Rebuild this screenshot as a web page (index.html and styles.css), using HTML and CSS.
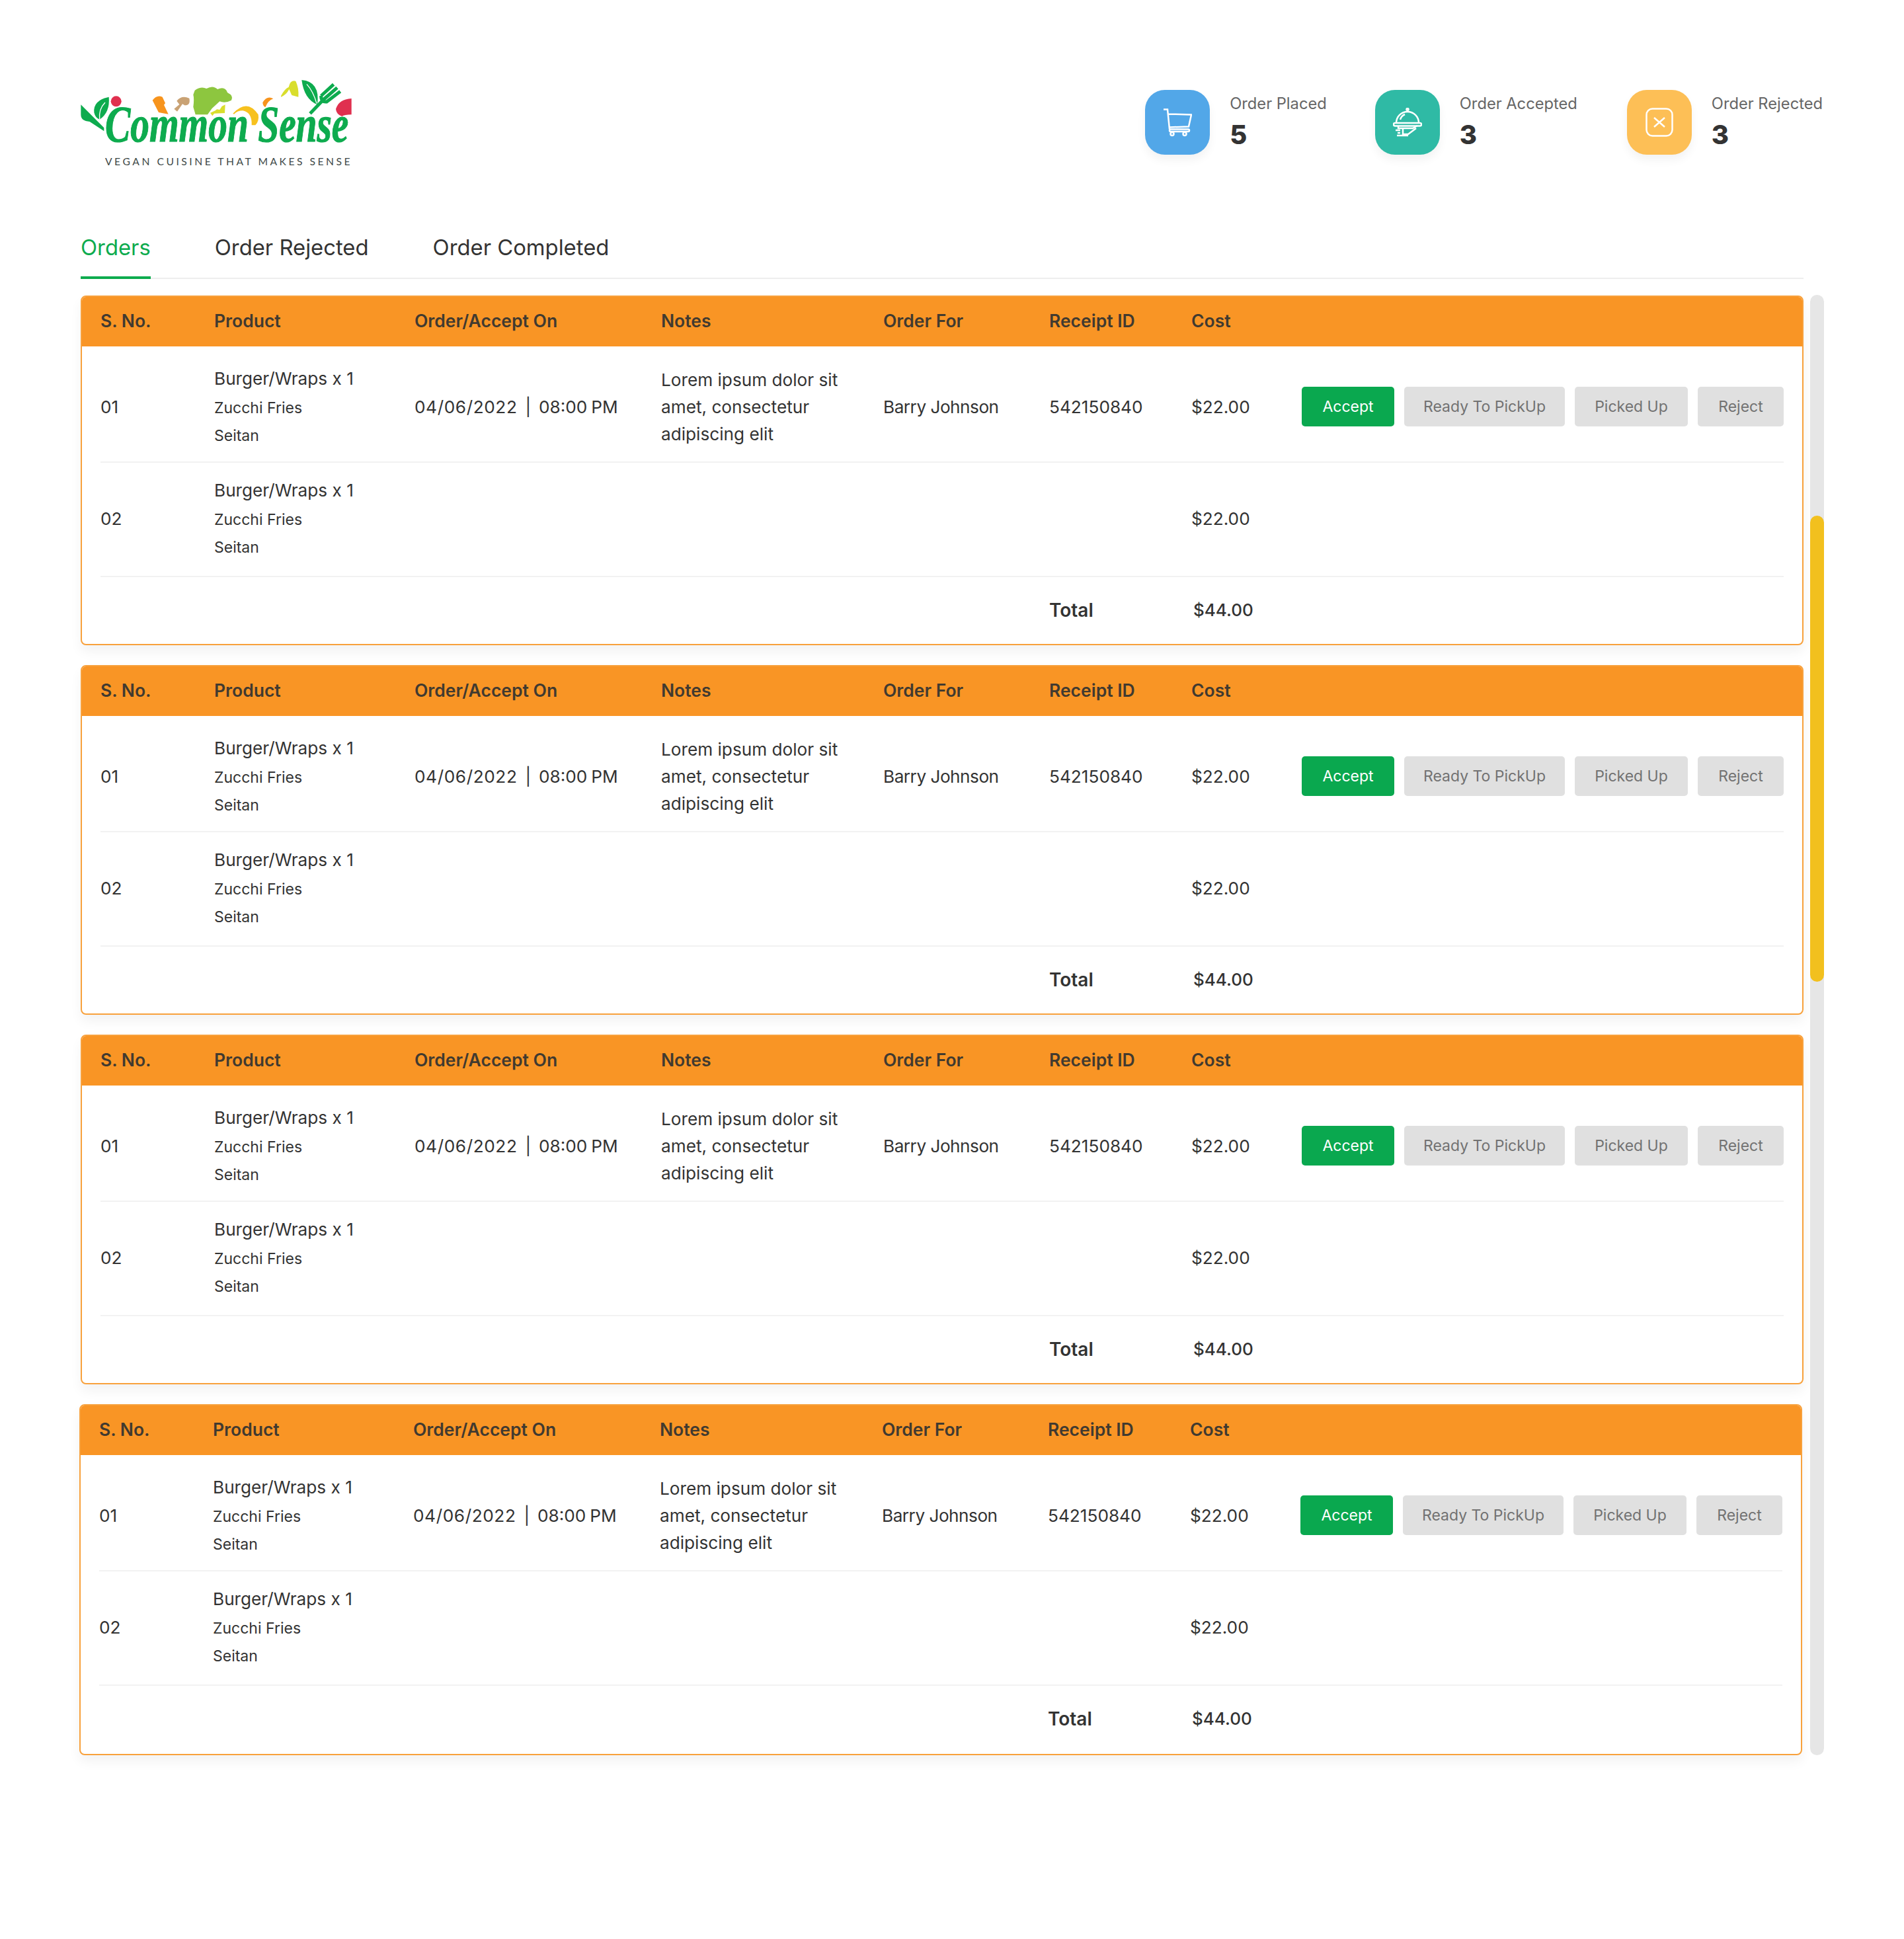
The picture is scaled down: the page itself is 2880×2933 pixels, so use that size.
FILE: index.html
```html
<!DOCTYPE html>
<html lang="en">
<head>
    <meta charset="UTF-8">
    <meta name="viewport" content="width=device-width, initial-scale=1.0">
    <title>Common Sense - Orders</title>
    <link rel="stylesheet" href="styles.css">
</head>
<body>
    <div class="page">
        <!-- Header -->
        <header class="top-bar">
            <svg class="logo" viewBox="94 90 1230 405" aria-label="Common Sense logo">
                <path class="g" d="M95 205 L200 310 L200 325 L135 282 Q95 280 95 250 Z"/>
                <path class="g" d="M222 170 Q150 185 155 240 Q160 265 180 272 Q228 240 222 170 Z"/>
                <path class="rib" d="M205 195 Q175 225 180 272"/>
                <circle class="r" cx="255" cy="190" r="24"/>
                <path class="o" d="M420 185 Q440 158 465 170 L478 198 L472 206 L492 248 L448 240 Z"/>
                <path class="t" d="M530 188 Q552 160 587 176 Q594 208 566 208 L556 202 L532 236 L518 224 L542 204 Z"/>
                <path class="b" d="M612 140 Q640 120 665 132 Q695 115 715 135 Q750 120 760 150 Q790 165 778 185 Q750 200 725 190 L690 222 L670 250 L615 250 L605 215 Q610 180 605 160 Z"/>
                <path class="y" d="M682 242 L705 232 L712 226 L725 228 L735 212 L750 205 L748 243 L700 245 L692 256 Z"/>
                <path class="w" d="M785 245 Q850 175 900 250 Q905 280 887 298 L870 298 Q872 240 830 232 Q805 232 790 248 Z"/>
                <path class="o" d="M920 195 Q940 162 968 178 Q945 185 932 217 Q920 210 920 195 Z"/>
                <path class="y" d="M1003 165 Q1020 132 1038 125 Q1045 92 1070 98 Q1085 130 1082 170 L1052 162 L1040 135 Q1028 160 1003 170 Z"/>
                <path class="g" d="M1097 93 Q1182 100 1168 205 Q1108 180 1097 93 Z"/>
                <path class="rib" d="M1120 112 Q1150 145 1165 200"/>
                <path class="fork" d="M1135 245 L1200 178 M1185 165 Q1185 195 1210 192 L1272 145 M1185 165 L1242 113 M1198 180 L1258 128"/>
                <path class="r" d="M1252 225 Q1265 180 1323 177 L1323 250 Q1290 250 1280 258 Q1255 250 1252 225 Z"/>
                <text class="logo-script" transform="translate(205 372) scale(1 1.150)" textLength="1105" lengthAdjust="spacingAndGlyphs">Common Sense</text>
                <text class="logo-tag" x="205" y="480" textLength="1112">VEGAN CUISINE THAT MAKES SENSE</text>
            </svg>
            <div class="stats">
                <div class="stat">
                    <div class="stat-icon blue">
                        <svg viewBox="0 0 44 42"><path d="M1 1.500h6l3 30M8 8.500 43 9.500 39 27.500 10 28.500"/><rect x="10" y="31.500" width="30" height="3.500" rx="1.700"/><circle cx="14" cy="38.500" r="2.500"/><circle cx="33" cy="38.500" r="2.500"/></svg>
                    </div>
                    <div><div class="stat-label">Order Placed</div><div class="stat-value">5</div></div>
                </div>
                <div class="stat">
                    <div class="stat-icon teal">
                        <svg viewBox="0 0 44 44"><circle cx="22" cy="2.500" r="1.500"/><path d="M5 23a17 17 0 0 1 34 0"/><path d="M11 18a12 12 0 0 1 7-8"/><rect x="1" y="23" width="42" height="4.500" rx="2"/><path d="M8 28v3h22l7-4M15 31v9h8l12-9M4 34h7M7 38h4M6 42h17"/></svg>
                    </div>
                    <div><div class="stat-label">Order Accepted</div><div class="stat-value">3</div></div>
                </div>
                <div class="stat">
                    <div class="stat-icon amber">
                        <svg viewBox="0 0 42 44"><rect x="1.500" y="1.500" width="39" height="41" rx="9"/><path d="M13 15 29 29M29 15 13 29"/></svg>
                    </div>
                    <div><div class="stat-label">Order Rejected</div><div class="stat-value">3</div></div>
                </div>
            </div>
        </header>

        <div class="content">
            <div class="content-main">
                <!-- Tabs -->
                <nav class="tabs">
                    <a class="tab active">Orders</a>
                    <a class="tab">Order Rejected</a>
                    <a class="tab">Order Completed</a>
                </nav>

                <!-- Order cards -->
                <div class="card">
                    <div class="row row-head">
                        <div>S. No.</div><div>Product</div><div>Order/Accept On</div><div>Notes</div><div>Order For</div><div>Receipt ID</div><div>Cost</div>
                    </div>
                    <div class="card-body">
                        <div class="row row-first">
                            <div>01</div>
                            <div class="product"><div>Burger/Wraps x 1</div><small>Zucchi Fries</small><small>Seitan</small></div>
                            <div class="when"><span class="date">04/06/2022</span> &nbsp;|&nbsp; 08:00 PM</div>
                            <div class="notes">Lorem ipsum dolor sit amet, consectetur adipiscing elit</div>
                            <div class="name">Barry Johnson</div>
                            <div>542150840</div>
                            <div>$22.00</div>
                            <div class="actions"><button class="btn btn-accept">Accept</button><button class="btn btn-ready">Ready To PickUp</button><button class="btn btn-picked">Picked Up</button><button class="btn btn-reject">Reject</button></div>
                        </div>
                        <div class="row row-second">
                            <div>02</div>
                            <div class="product"><div>Burger/Wraps x 1</div><small>Zucchi Fries</small><small>Seitan</small></div>
                            <div></div><div></div><div></div><div></div>
                            <div>$22.00</div>
                        </div>
                        <div class="row row-total">
                            <div></div><div></div><div></div><div></div><div></div>
                            <div class="total-label">Total</div>
                            <div class="total-cost">$44.00</div>
                        </div>
                    </div>
                </div>

                <div class="card">
                    <div class="row row-head">
                        <div>S. No.</div><div>Product</div><div>Order/Accept On</div><div>Notes</div><div>Order For</div><div>Receipt ID</div><div>Cost</div>
                    </div>
                    <div class="card-body">
                        <div class="row row-first">
                            <div>01</div>
                            <div class="product"><div>Burger/Wraps x 1</div><small>Zucchi Fries</small><small>Seitan</small></div>
                            <div class="when"><span class="date">04/06/2022</span> &nbsp;|&nbsp; 08:00 PM</div>
                            <div class="notes">Lorem ipsum dolor sit amet, consectetur adipiscing elit</div>
                            <div class="name">Barry Johnson</div>
                            <div>542150840</div>
                            <div>$22.00</div>
                            <div class="actions"><button class="btn btn-accept">Accept</button><button class="btn btn-ready">Ready To PickUp</button><button class="btn btn-picked">Picked Up</button><button class="btn btn-reject">Reject</button></div>
                        </div>
                        <div class="row row-second">
                            <div>02</div>
                            <div class="product"><div>Burger/Wraps x 1</div><small>Zucchi Fries</small><small>Seitan</small></div>
                            <div></div><div></div><div></div><div></div>
                            <div>$22.00</div>
                        </div>
                        <div class="row row-total">
                            <div></div><div></div><div></div><div></div><div></div>
                            <div class="total-label">Total</div>
                            <div class="total-cost">$44.00</div>
                        </div>
                    </div>
                </div>

                <div class="card">
                    <div class="row row-head">
                        <div>S. No.</div><div>Product</div><div>Order/Accept On</div><div>Notes</div><div>Order For</div><div>Receipt ID</div><div>Cost</div>
                    </div>
                    <div class="card-body">
                        <div class="row row-first">
                            <div>01</div>
                            <div class="product"><div>Burger/Wraps x 1</div><small>Zucchi Fries</small><small>Seitan</small></div>
                            <div class="when"><span class="date">04/06/2022</span> &nbsp;|&nbsp; 08:00 PM</div>
                            <div class="notes">Lorem ipsum dolor sit amet, consectetur adipiscing elit</div>
                            <div class="name">Barry Johnson</div>
                            <div>542150840</div>
                            <div>$22.00</div>
                            <div class="actions"><button class="btn btn-accept">Accept</button><button class="btn btn-ready">Ready To PickUp</button><button class="btn btn-picked">Picked Up</button><button class="btn btn-reject">Reject</button></div>
                        </div>
                        <div class="row row-second">
                            <div>02</div>
                            <div class="product"><div>Burger/Wraps x 1</div><small>Zucchi Fries</small><small>Seitan</small></div>
                            <div></div><div></div><div></div><div></div>
                            <div>$22.00</div>
                        </div>
                        <div class="row row-total">
                            <div></div><div></div><div></div><div></div><div></div>
                            <div class="total-label">Total</div>
                            <div class="total-cost">$44.00</div>
                        </div>
                    </div>
                </div>

                <div class="card card-last">
                    <div class="row row-head">
                        <div>S. No.</div><div>Product</div><div>Order/Accept On</div><div>Notes</div><div>Order For</div><div>Receipt ID</div><div>Cost</div>
                    </div>
                    <div class="card-body">
                        <div class="row row-first">
                            <div>01</div>
                            <div class="product"><div>Burger/Wraps x 1</div><small>Zucchi Fries</small><small>Seitan</small></div>
                            <div class="when"><span class="date">04/06/2022</span> &nbsp;|&nbsp; 08:00 PM</div>
                            <div class="notes">Lorem ipsum dolor sit amet, consectetur adipiscing elit</div>
                            <div class="name">Barry Johnson</div>
                            <div>542150840</div>
                            <div>$22.00</div>
                            <div class="actions"><button class="btn btn-accept">Accept</button><button class="btn btn-ready">Ready To PickUp</button><button class="btn btn-picked">Picked Up</button><button class="btn btn-reject">Reject</button></div>
                        </div>
                        <div class="row row-second">
                            <div>02</div>
                            <div class="product"><div>Burger/Wraps x 1</div><small>Zucchi Fries</small><small>Seitan</small></div>
                            <div></div><div></div><div></div><div></div>
                            <div>$22.00</div>
                        </div>
                        <div class="row row-total">
                            <div></div><div></div><div></div><div></div><div></div>
                            <div class="total-label">Total</div>
                            <div class="total-cost">$44.00</div>
                        </div>
                    </div>
                </div>
            </div>

            <!-- Scrollbar -->
            <div class="scroll-track"><div class="scroll-thumb"></div></div>
        </div>
    </div>
</body>
</html>
```
FILE: styles.css
```css
body {
    font-family: Inter, "Noto Sans", sans-serif;
    margin: 0;
    padding: 0;
    background-color: #ffffff;
    color: #333333;
    font-size: 26.200px;
}
.page {
    padding: 120px 121px 275px 122px;
}
.top-bar {
    display: flex;
    justify-content: space-between;
    align-items: center;
    height: 135px;
}
.logo {
    width: 410px;
    height: 135px;
    overflow: visible;
}
.logo .g { fill: #0dab4e; }
.logo .r { fill: #e0304f; }
.logo .o { fill: #f7941d; }
.logo .t { fill: #c9a274; }
.logo .b { fill: #8dc63f; }
.logo .y { fill: #d9de2d; }
.logo .w { fill: #f7c11e; }
.logo .rib {
    fill: none;
    stroke: #ffffff;
    stroke-width: 4;
}
.logo .fork {
    fill: none;
    stroke: #0dab4e;
    stroke-width: 15;
}
.logo-script {
    font-family: "Liberation Serif", serif;
    font-style: italic;
    font-weight: 700;
    font-size: 204px;
    fill: #0dab4e;
    stroke: #0dab4e;
    stroke-width: 3;
}
.logo-tag {
    font-family: Lato, sans-serif;
    font-size: 47px;
    fill: #3f4a48;
}
.stats {
    display: flex;
    margin-top: -5px;
    margin-right: 2px;
}
.stat {
    display: flex;
    align-items: center;
    margin-left: 75px;
}
.stat:nth-child(2) {
    margin-left: 73px;
}
.stat-icon {
    width: 98px;
    height: 98px;
    border-radius: 30px;
    margin-right: 30px;
    display: flex;
    justify-content: center;
    align-items: center;
    box-shadow: 0 8px 14px rgba(0, 0, 0, 0.05);
}
.stat-icon svg {
    width: 44px;
    height: 44px;
    fill: none;
    stroke: #ffffff;
    stroke-width: 2.500;
}
.stat-icon.blue { background: #52a7e8; }
.stat-icon.teal { background: #2fbaa5; }
.stat-icon.amber { background: #fdbf56; }
.stat-label {
    font-size: 23.700px;
    line-height: 28px;
    color: #666666;
}
.stat-value {
    font-size: 40px;
    font-weight: 800;
    line-height: 46px;
    margin-top: 10px;
    color: #333333;
}
.content {
    display: flex;
    align-items: flex-end;
}
.content-main {
    width: 2606px;
}
.tabs {
    display: flex;
    margin-top: 99px;
    margin-bottom: 25px;
    border-bottom: 2px solid #eeeeee;
    height: 66px;
}
.tab {
    font-size: 32.800px;
    line-height: 40px;
    margin-right: 97px;
    color: #333333;
}
.tab.active {
    color: #0dab4e;
    height: 64px;
    border-bottom: 4px solid #0dab4e;
}
.card {
    border: 2px solid #f8a13c;
    border-radius: 8px;
    margin-bottom: 30px;
    height: 529px;
    box-sizing: border-box;
    box-shadow: 0 10px 18px rgba(0, 0, 0, 0.05);
    overflow: hidden;
}
.card-last {
    margin-left: -2px;
    margin-right: 2px;
    margin-bottom: 0;
    height: 531px;
}
.row {
    display: grid;
    grid-template-columns: 172px 303px 373px 336px 251px 215px 167px 1fr;
    align-items: center;
}
.row-head {
    background: #f99525;
    height: 77px;
    margin-top: -2px;
    padding: 0 28px 1px;
    font-size: 26.500px;
    font-weight: 600;
    box-sizing: border-box;
    color: #413a30;
}
.card-body {
    padding: 0 28px;
}
.row-first {
    padding: 26px 0 24px;
    height: 176px;
    box-sizing: border-box;
    border-bottom: 2px solid #f2f2f2;
}
.row-second {
    padding: 19px 0 27px;
    height: 173px;
    box-sizing: border-box;
    border-bottom: 2px solid #f2f2f2;
}
.row-total {
    height: 103px;
    padding-bottom: 4px;
    box-sizing: border-box;
}
.total-label {
    font-weight: 600;
    font-size: 28px;
}
.total-cost {
    padding-left: 3px;
    font-size: 26px;
    font-weight: 500;
}
.product {
    line-height: 42px;
    margin-top: 2px;
}
.product small {
    display: block;
    font-size: 23px;
}
.product div + small {
    margin-top: 2px;
}
.when {
    word-spacing: -1.400px;
}
.date {
    letter-spacing: 0.600px;
}
.name {
    letter-spacing: -0.500px;
}
.notes {
    line-height: 41px;
    padding-right: 30px;
}
.actions {
    display: flex;
    gap: 15px;
}
.btn {
    font-family: inherit;
    font-size: 23px;
    height: 60px;
    padding: 0;
    border: none;
    border-radius: 5px;
    background: #e0e0e0;
    color: #727272;
    cursor: pointer;
}
.btn-accept {
    width: 140px;
    background: #0aa84f;
    color: #ffffff;
}
.btn-ready { width: 243px; }
.btn-picked { width: 171px; }
.btn-reject { width: 130px; }
.scroll-track {
    width: 21px;
    height: 2209px;
    margin-left: 10px;
    border-radius: 11px;
    background: #e6e6e6;
}
.scroll-thumb {
    width: 21px;
    height: 705px;
    margin-top: 334px;
    border-radius: 11px;
    background: #f2c01e;
}
```
